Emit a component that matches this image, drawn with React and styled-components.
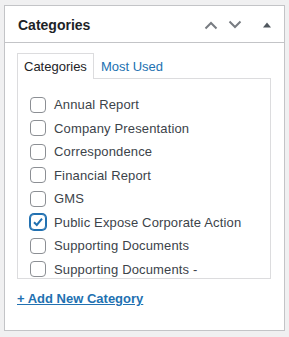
import styled, { createGlobalStyle } from "styled-components";

const GlobalStyle = createGlobalStyle`
  html, body { margin: 0; padding: 0; background: #f0f0f1; }
  body { font-family: "Liberation Sans", Arial, sans-serif; color: #1d2327; }
`;

const categories = [
  { name: "Annual Report" },
  { name: "Company Presentation" },
  { name: "Correspondence" },
  { name: "Financial Report" },
  { name: "GMS" },
  { name: "Public Expose Corporate Action", checked: true },
  { name: "Supporting Documents" },
  { name: "Supporting Documents -" },
];

function App() {
  return (
    <>
      <GlobalStyle />
      <Page>
        <Box>
          <Header>
            <Title>Categories</Title>
            <Controls>
              <IconButton>
                <svg width="14" height="10" viewBox="0 0 14 10">
                  <path d="M1.5 8.5 L7 3 L12.5 8.5" fill="none" stroke="#787c82" strokeWidth="2" />
                </svg>
              </IconButton>
              <IconButton>
                <svg width="14" height="10" viewBox="0 0 14 10">
                  <path d="M1.5 1.5 L7 7 L12.5 1.5" fill="none" stroke="#787c82" strokeWidth="2" />
                </svg>
              </IconButton>
              <Toggle>
                <svg width="10" height="8" viewBox="0 0 10 8">
                  <path d="M5 1.5 L9 6.5 L1 6.5 Z" fill="#50575e" />
                </svg>
              </Toggle>
            </Controls>
          </Header>
          <Inside>
            <Tabs>
              <Tab active>Categories</Tab>
              <Tab>Most Used</Tab>
            </Tabs>
            <TabPanel>
              {categories.map((c) => (
                <Item key={c.name}>
                  <Check checked={c.checked}>
                    {c.checked && (
                      <svg width="14" height="14" viewBox="0 0 14 14">
                        <path d="M3 7.2 L5.8 10 L11 3.6" fill="none" stroke="#2271b1" strokeWidth="2" />
                      </svg>
                    )}
                  </Check>
                  <Label>{c.name}</Label>
                </Item>
              ))}
            </TabPanel>
            <AddLink href="#">+ Add New Category</AddLink>
          </Inside>
        </Box>
      </Page>
    </>
  );
}

const Page = styled.div`
  padding: 5px 5px 0 4px;
  height: 337px;
  box-sizing: border-box;
`;

const Box = styled.div`
  width: 281px;
  box-sizing: border-box;
  background: #fff;
  border: 1px solid #c3c4c7;
  height: 326px;
`;

const Header = styled.div`
  display: flex;
  align-items: center;
  justify-content: space-between;
  box-sizing: border-box;
  padding: 2px 12px 0 13px;
  border-bottom: 1px solid #c3c4c7;
  height: 37px;
`;

const Title = styled.h2`
  margin: 0;
  font-size: 14px;
  font-weight: 700;
  color: #1d2327;
`;

const Controls = styled.div`
  display: flex;
  align-items: center;
  gap: 10px;
`;

const IconButton = styled.span`
  display: flex;
  align-items: center;
  justify-content: center;
  width: 14px;
  height: 20px;
`;

const Toggle = styled(IconButton)`
  width: 10px;
  margin-left: 10px;
`;

const Inside = styled.div`
  padding: 10px 13px 0 12px;
`;

const Tabs = styled.div`
  display: flex;
  height: 25px;
`;

const Tab = styled.div`
  padding: 0 6px;
  font-size: 13px;
  line-height: 25px;
  color: ${(p) => (p.active ? "#1d2327" : "#2271b1")};
  background: ${(p) => (p.active ? "#fff" : "transparent")};
  border: 1px solid ${(p) => (p.active ? "#dcdcde" : "transparent")};
  border-bottom: none;
  margin-bottom: -1px;
  position: relative;
  z-index: 1;
  height: 26px;
  box-sizing: border-box;
`;

const TabPanel = styled.div`
  border: 1px solid #dcdcde;
  background: #fff;
  height: 201px;
  box-sizing: border-box;
  overflow: hidden;
  padding: 14px 12px 0 12px;
`;

const Item = styled.div`
  display: flex;
  align-items: center;
  height: 23.5px;
  gap: 8px;
`;

const Check = styled.span`
  display: flex;
  align-items: center;
  justify-content: center;
  width: 16px;
  height: 16px;
  box-sizing: border-box;
  border: 1px solid ${(p) => (p.checked ? "#2271b1" : "#8c8f94")};
  box-shadow: ${(p) => (p.checked ? "0 0 0 1px #2271b1" : "none")};
  border-radius: 4px;
  background: #fff;
  flex-shrink: 0;
`;

const Label = styled.span`
  font-size: 13px;
  letter-spacing: 0.15px;
  color: #3c434a;
  white-space: nowrap;
`;

const AddLink = styled.a`
  display: inline-block;
  margin-top: 12px;
  font-size: 13px;
  font-weight: 700;
  color: #2271b1;
  text-decoration: underline;
`;

export default App;
